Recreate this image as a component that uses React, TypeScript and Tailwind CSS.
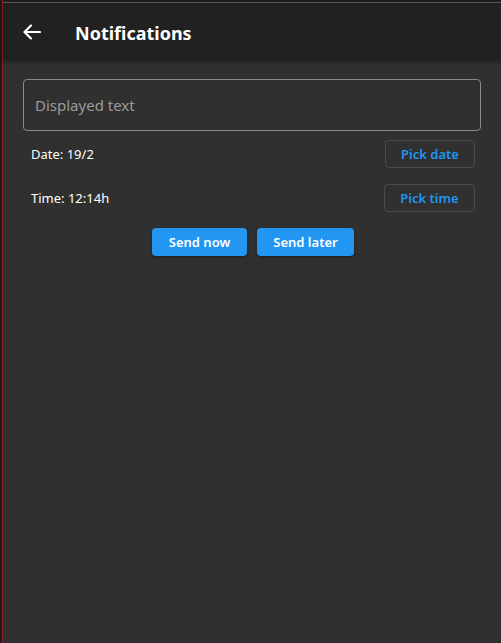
import React from "react";

export default function App() {
  return (
    <div
      className="w-[501px] h-[643px] flex overflow-hidden bg-[#303030]"
      style={{ fontFamily: '"Noto Sans", "Open Sans", sans-serif' }}
    >
      <div className="w-[2px] h-full bg-[#1c1c1c]" />
      <div className="w-[1px] h-full bg-[#8d1d2c]" />
      <div className="flex-1 flex flex-col">
        <div className="h-[2px] bg-[#1e1e1e]" />
        <div className="h-[1px] bg-[#5a5a5a]" />
        <div className="h-[57px] bg-[#212121] flex items-center shadow-[0_2px_4px_rgba(0,0,0,0.35)] relative z-10">
          <svg
            width="18"
            height="16"
            viewBox="0 0 18 16"
            className="ml-[20px]"
            fill="none"
            stroke="white"
            strokeWidth="2.2"
            strokeLinecap="round"
            strokeLinejoin="round"
          >
            <path d="M17 8H2" />
            <path d="M8 1.5L1.5 8L8 14.5" />
          </svg>
          <span className="ml-[34px] mt-[3px] text-white font-bold text-[18px]">
            Notifications
          </span>
        </div>
        <div className="flex flex-col px-[20px] pt-[19px]">
          <div className="h-[52px] border border-[#8a8a8a] rounded-[4px] flex items-center px-[11px]">
            <span className="text-[#9b9b9b] text-[15px] mt-[1px]">Displayed text</span>
          </div>
          <div className="flex items-center justify-between mt-[9px] pl-[8px] pr-[6px]">
            <span className="text-white text-[13px] mt-[2px]">Date: 19/2</span>
            <button className="h-[28px] w-[90px] pt-[2px] border border-[#4a4a4a] rounded-[4px] text-[#2196f3] text-[13px] font-semibold">
              Pick date
            </button>
          </div>
          <div className="flex items-center justify-between mt-[16px] pl-[8px] pr-[6px]">
            <span className="text-white text-[13px] mt-[2px]">Time: 12:14h</span>
            <button className="h-[28px] w-[91px] pt-[2px] border border-[#4a4a4a] rounded-[4px] text-[#2196f3] text-[13px] font-semibold">
              Pick time
            </button>
          </div>
          <div className="flex justify-center gap-[10px] mt-[16px] pl-[2px]">
            <button className="h-[28px] w-[95px] pt-[2px] bg-[#2196f3] rounded-[4px] text-white text-[13px] font-semibold shadow-[0_1px_3px_rgba(0,0,0,0.4)]">
              Send now
            </button>
            <button className="h-[28px] w-[97px] pt-[2px] bg-[#2196f3] rounded-[4px] text-white text-[13px] font-semibold shadow-[0_1px_3px_rgba(0,0,0,0.4)]">
              Send later
            </button>
          </div>
        </div>
      </div>
    </div>
  );
}
